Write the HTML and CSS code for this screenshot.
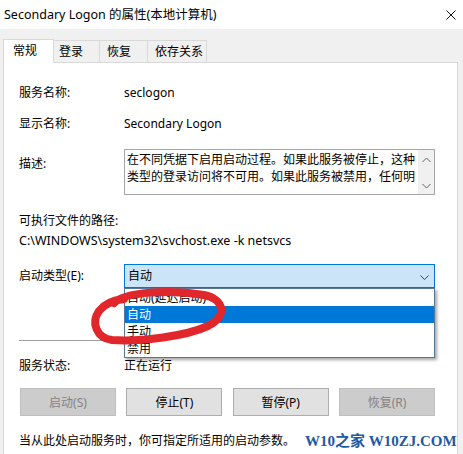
FILE: index.html
```html
<!DOCTYPE html>
<html>
<head>
  <title>Secondary Logon 的属性(本地计算机)</title>
  <link rel="stylesheet" href="styles.css">
</head>
<body>
  <div class="window">
    <div class="titlebar">
      <span class="title">Secondary Logon 的属性(本地计算机)</span>
      <svg class="close" width="10" height="10" viewBox="0 0 10 10">
        <path d="M0.5 0.5 L9.5 9.5 M9.5 0.5 L0.5 9.5" stroke="#111" stroke-width="1" fill="none"/>
      </svg>
    </div>

    <div class="tabs">
      <div class="tab active">常规</div>
      <div class="tab t-logon">登录</div>
      <div class="tab t-recover">恢复</div>
      <div class="tab t-deps">依存关系</div>
    </div>

    <div class="panel">
      <div class="row r-name">
        <span class="label">服务名称:</span>
        <span class="value">seclogon</span>
      </div>
      <div class="row r-display">
        <span class="label">显示名称:</span>
        <span class="value">Secondary Logon</span>
      </div>
      <div class="row r-desc">
        <span class="label">描述:</span>
        <div class="desc">
          <div class="desc-text">在不同凭据下启用启动过程。如果此服务被停止，这种<br>类型的登录访问将不可用。如果此服务被禁用，任何明</div>
          <div class="scroll">
            <svg width="9" height="6" viewBox="0 0 9 6"><path d="M0.5 5 L4.5 1 L8.5 5" stroke="#606060" fill="none"/></svg>
            <svg width="9" height="6" viewBox="0 0 9 6"><path d="M0.5 1 L4.5 5 L8.5 1" stroke="#606060" fill="none"/></svg>
          </div>
        </div>
      </div>

      <div class="path-label">可执行文件的路径:</div>
      <div class="path">C:\WINDOWS\system32\svchost.exe -k netsvcs</div>

      <div class="row r-start">
        <span class="label">启动类型(E):</span>
        <div class="combo">
          <span>自动</span>
          <svg class="chevron" width="9" height="5" viewBox="0 0 9 5"><path d="M0.5 0.5 L4.5 4.5 L8.5 0.5" stroke="#444" fill="none"/></svg>
          <div class="dropdown">
            <div class="item">自动(延迟启动)</div>
            <div class="item selected">自动</div>
            <div class="item">手动</div>
            <div class="item">禁用</div>
          </div>
        </div>
      </div>

      <div class="sep"></div>

      <div class="row r-status">
        <span class="label">服务状态:</span>
        <span class="value">正在运行</span>
      </div>

      <div class="buttons">
        <button class="btn" disabled>启动(S)</button>
        <button class="btn">停止(T)</button>
        <button class="btn">暂停(P)</button>
        <button class="btn" disabled>恢复(R)</button>
      </div>

      <div class="hint">当从此处启动服务时，你可指定所适用的启动参数。</div>
    </div>

    <!-- red marker scribble drawn over the screenshot -->
    <svg class="scribble" width="463" height="454" viewBox="0 0 463 454">
      <path d="M114 303 C124 292, 170 289, 204 295 C224 299, 228 316, 208 326 C186 336, 142 342, 112 340 C96 338, 91 322, 99 311 C105 303, 114 300, 124 299"
            stroke="#e2272c" stroke-width="8" fill="none" stroke-linecap="round" stroke-linejoin="round"/>
    </svg>

    <div class="watermark">W10之家 W10ZJ.COM</div>
  </div>
</body>
</html>
```

FILE: styles.css
```css
body {
  margin: 0;
  background: #f0f0f0;
  font-family: "Noto Sans", "Noto Sans CJK SC", sans-serif;
  font-size: 12px;
  line-height: 16px;
  color: #000000;
}

.window {
  position: relative;
  height: 454px;
  overflow: hidden;
}

.titlebar {
  height: 29px;
  background: #ffffff;
  display: flex;
  align-items: center;
  justify-content: space-between;
  padding: 0 7px 0 4px;
}

.title {
  font-size: 12.5px;
}

.tabs {
  height: 33px;
  display: flex;
  align-items: flex-end;
  padding-left: 3px;
}

.tab {
  box-sizing: border-box;
  height: 22px;
  padding-top: 3px;
  background: #f0f0f0;
  border: 1px solid #d9d9d9;
  border-left: none;
  border-bottom: none;
}

.tab.active {
  height: 24px;
  width: 51px;
  padding-left: 9px;
  margin-bottom: -1px;
  background: #ffffff;
  border-left: 1px solid #d9d9d9;
  position: relative;
  z-index: 1;
}

.t-logon {
  width: 46px;
  padding-left: 5px;
}

.t-recover {
  width: 48px;
  padding-left: 7px;
}

.t-deps {
  width: 59px;
  padding-left: 7px;
}

.panel {
  margin: 0 5px 0 3px;
  height: 420px;
  background: #ffffff;
  border: 1px solid #d9d9d9;
  padding: 22px 0 0 15px;
}

.row {
  display: flex;
  align-items: center;
}

.label {
  width: 105px;
  flex: none;
}

.r-display {
  margin-top: 15px;
}

.r-desc {
  margin-top: 17px;
  align-items: flex-start;
}

.r-desc .label {
  padding-top: 7px;
}

.desc {
  box-sizing: border-box;
  width: 311px;
  height: 46px;
  border: 1px solid #a5a5a5;
  display: flex;
}

.desc-text {
  flex: 1;
  padding: 1px 0 0 2px;
  line-height: 17px;
  white-space: nowrap;
  overflow: hidden;
}

.scroll {
  width: 16px;
  background: #f0f0f0;
  display: flex;
  flex-direction: column;
  justify-content: space-between;
  align-items: center;
  padding: 7px 0 5px;
}

.path-label {
  margin-top: 18px;
}

.path {
  margin-top: 4px;
  font-size: 12.5px;
}

.r-start {
  margin-top: 15px;
}

.combo {
  box-sizing: border-box;
  position: relative;
  width: 311px;
  height: 24px;
  border: 1px solid #0078d7;
  background: #cce4f7;
  padding-left: 3px;
  display: flex;
  align-items: center;
}

.chevron {
  position: absolute;
  right: 5px;
  top: 10px;
}

.dropdown {
  box-sizing: border-box;
  position: absolute;
  top: 23px;
  left: -1px;
  width: 311px;
  background: #ffffff;
  border: 1px solid #56779a;
  box-shadow: 2px 2px 3px rgba(0, 0, 0, 0.35);
  z-index: 2;
}

.item {
  height: 17px;
  line-height: 17px;
  padding-left: 2px;
}

.item.selected {
  background: #0078d7;
  color: #ffffff;
}

.sep {
  margin-top: 52px;
  width: 416px;
  height: 1px;
  background: #a0a0a0;
}

.r-status {
  margin-top: 17px;
}

.buttons {
  margin: 14px 0 0 1px;
  width: 415px;
  display: flex;
  justify-content: space-between;
}

.btn {
  box-sizing: border-box;
  width: 96px;
  height: 28px;
  border: 1px solid #adadad;
  background: #e1e1e1;
  font-family: inherit;
  font-size: 12px;
  color: #000000;
  padding: 0;
}

.btn:disabled {
  background: #cccccc;
  border-color: #bfbfbf;
  color: #838383;
}

.hint {
  margin-top: 17px;
}

.scribble {
  position: absolute;
  left: 0;
  top: 0;
  z-index: 5;
  pointer-events: none;
}

.watermark {
  position: absolute;
  left: 305px;
  top: 432px;
  z-index: 6;
  font-family: "Liberation Serif", "Noto Sans CJK SC", serif;
  font-weight: bold;
  font-size: 15px;
  line-height: 18px;
  color: #1d5aa6;
}
```
